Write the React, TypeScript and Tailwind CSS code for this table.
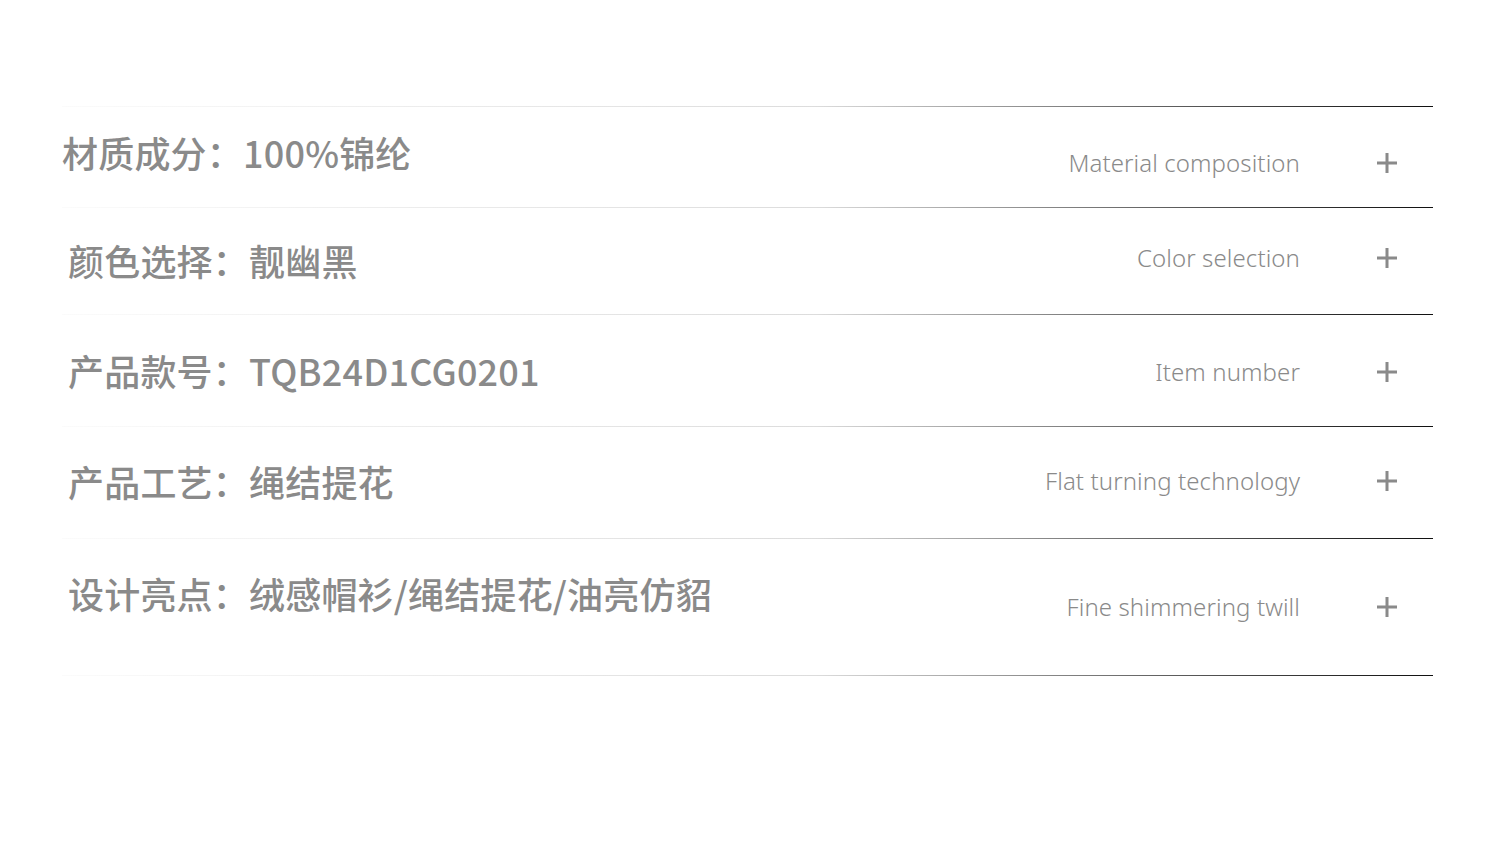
const rows = [
  {
    zh: "材质成分：100%锦纶",
    en: "Material composition",
    row: "h-[100px]",
    zhCls: "mt-[27px] ml-0",
    enCls: "mt-[44px]",
  },
  {
    zh: "颜色选择：靓幽黑",
    en: "Color selection",
    row: "h-[106px]",
    zhCls: "mt-[34px] ml-[6px]",
    enCls: "mt-[38px]",
  },
  {
    zh: "产品款号：TQB24D1CG0201",
    en: "Item number",
    row: "h-[111px]",
    zhCls: "mt-[37px] ml-[6px]",
    enCls: "mt-[45px]",
  },
  {
    zh: "产品工艺：绳结提花",
    en: "Flat turning technology",
    row: "h-[111px]",
    zhCls: "mt-[36px] ml-[6px]",
    enCls: "mt-[42px]",
  },
  {
    zh: "设计亮点：绒感帽衫/绳结提花/油亮仿貂",
    en: "Fine shimmering twill",
    row: "h-[136px]",
    zhCls: "mt-[36px] ml-[6px]",
    enCls: "mt-[56px]",
  },
];

function Line() {
  return (
    <div className="h-px w-full bg-gradient-to-r from-[#fbfbfb] via-[#dcdcdc] via-55% to-[#111]" />
  );
}

function Plus() {
  return (
    <svg width="20" height="20" viewBox="0 0 20 20" className="shrink-0">
      <rect x="0" y="8.5" width="20" height="3" fill="#8a8a8a" />
      <rect x="8.5" y="0" width="3" height="20" fill="#8a8a8a" />
    </svg>
  );
}

export default function App() {
  return (
    <div className="w-[1500px] h-[861px] bg-white overflow-hidden font-['Noto_Sans','Noto_Sans_CJK_SC',sans-serif]">
      <div className="ml-[62px] w-[1371px] pt-[106px]">
        <Line />
        {rows.map((r, i) => (
          <div key={i}>
            <div className={`flex items-start justify-between ${r.row}`}>
              <div
                className={`text-[36px] leading-none font-medium text-[#8a8a8a] tracking-[0.2px] font-['Noto_Sans_CJK_SC',sans-serif] ${r.zhCls}`}
              >
                {r.zh}
              </div>
              <div className={`flex items-center gap-[77px] pr-[36px] ${r.enCls}`}>
                <span className="text-[24px] leading-none font-light text-[#8a8a8a] tracking-[0.1px]">
                  {r.en}
                </span>
                <Plus />
              </div>
            </div>
            <Line />
          </div>
        ))}
      </div>
    </div>
  );
}
